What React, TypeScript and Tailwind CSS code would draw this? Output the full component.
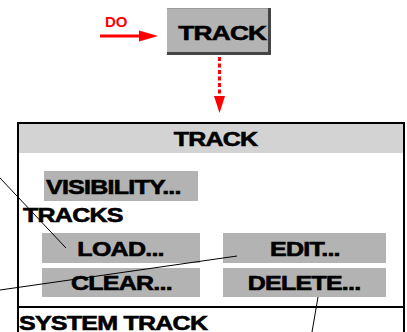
const FONT = "font-['Liberation_Sans',Arial,Helvetica,sans-serif]";

function Wide({ children, left }: { children: string; left?: boolean }) {
  return (
    <span
      className={`inline-block whitespace-nowrap font-bold text-black tracking-[-0.6px] scale-x-[1.25] [-webkit-text-stroke:0.6px_#000] ${
        left ? 'origin-left' : 'origin-center'
      }`}
    >
      {children}
    </span>
  );
}

function MenuButton({ label, h }: { label: string; h: string }) {
  return (
    <div className={`flex items-center justify-center bg-[#b3b3b3] text-[20px] leading-[20px] pt-[1px] ${h}`}>
      <Wide>{label}</Wide>
    </div>
  );
}

export default function App() {
  return (
    <div className={`relative w-[407px] h-[332px] overflow-hidden bg-white ${FONT}`}>
      {/* top: DO arrow + TRACK key */}
      <div className="flex h-[122px] pl-[100px] pt-[8px]">
        <div className="flex w-[60px] flex-col">
          <span className="ml-[5px] mt-[6px] text-[15px] leading-[15px] font-bold text-[#ff0000]">DO</span>
          <svg width="60" height="13" className="mt-[1px]">
            <line x1="0" y1="6" x2="42" y2="6" stroke="#ff0000" strokeWidth="3" />
            <polygon points="39,0.5 58,6 39,11.5" fill="#ff0000" />
          </svg>
        </div>
        <div className="ml-[7px] flex flex-col">
          <div className="flex h-[44px] w-[101px] items-center justify-center border-t border-[#9a9a9a] bg-[#b3b3b3] pl-[9px] pt-[4px] text-[21px] leading-[21px] shadow-[3px_0_0_#444,0_3px_0_#444,3px_3px_0_#444]">
            <Wide>TRACK</Wide>
          </div>
          <svg width="101" height="58" className="mt-[5px]">
            <line x1="52.5" y1="0" x2="52.5" y2="40" stroke="#ff0000" strokeWidth="3" strokeDasharray="4 2.5" />
            <polygon points="47,39 58,39 52.5,56" fill="#ff0000" />
          </svg>
        </div>
      </div>

      {/* TRACK menu panel */}
      <div className="ml-[17px] w-[388px] border-x-2 border-t-2 border-black">
        <div className="flex h-[29px] items-center justify-center bg-[#d3d3d3] pl-[8px] text-[20px] leading-[20px]">
          <Wide>TRACK</Wide>
        </div>
        <div className="border-b-2 border-black pb-[9px] pt-[18px]">
          <div className="ml-[25px] flex h-[30px] w-[154px] items-center bg-[#b3b3b3] pl-[2px] text-[20px] leading-[20px] pt-[1px]">
            <Wide left>VISIBILITY...</Wide>
          </div>
          <div className="ml-[4px] mt-[4px] text-[20px] leading-[20px]">
            <Wide left>TRACKS</Wide>
          </div>
          <div className="ml-[23px] mt-[8px] grid grid-cols-[158px_163px] gap-x-[23px] gap-y-[5px]">
            <MenuButton label="LOAD..." h="h-[30px]" />
            <MenuButton label="EDIT..." h="h-[30px]" />
            <MenuButton label="CLEAR..." h="h-[29px]" />
            <MenuButton label="DELETE..." h="h-[29px]" />
          </div>
        </div>
        <div className="h-[40px] pt-[5px] text-[20px] leading-[20px]">
          <Wide left>SYSTEM TRACK</Wide>
        </div>
      </div>

      {/* leader lines */}
      <svg className="pointer-events-none absolute left-0 top-0" width="407" height="332">
        <line x1="0" y1="178" x2="66" y2="248" stroke="#000" strokeWidth="1" />
        <line x1="0" y1="290" x2="237" y2="256" stroke="#000" strokeWidth="1" />
        <line x1="318" y1="297" x2="312" y2="332" stroke="#000" strokeWidth="1" />
      </svg>
    </div>
  );
}
